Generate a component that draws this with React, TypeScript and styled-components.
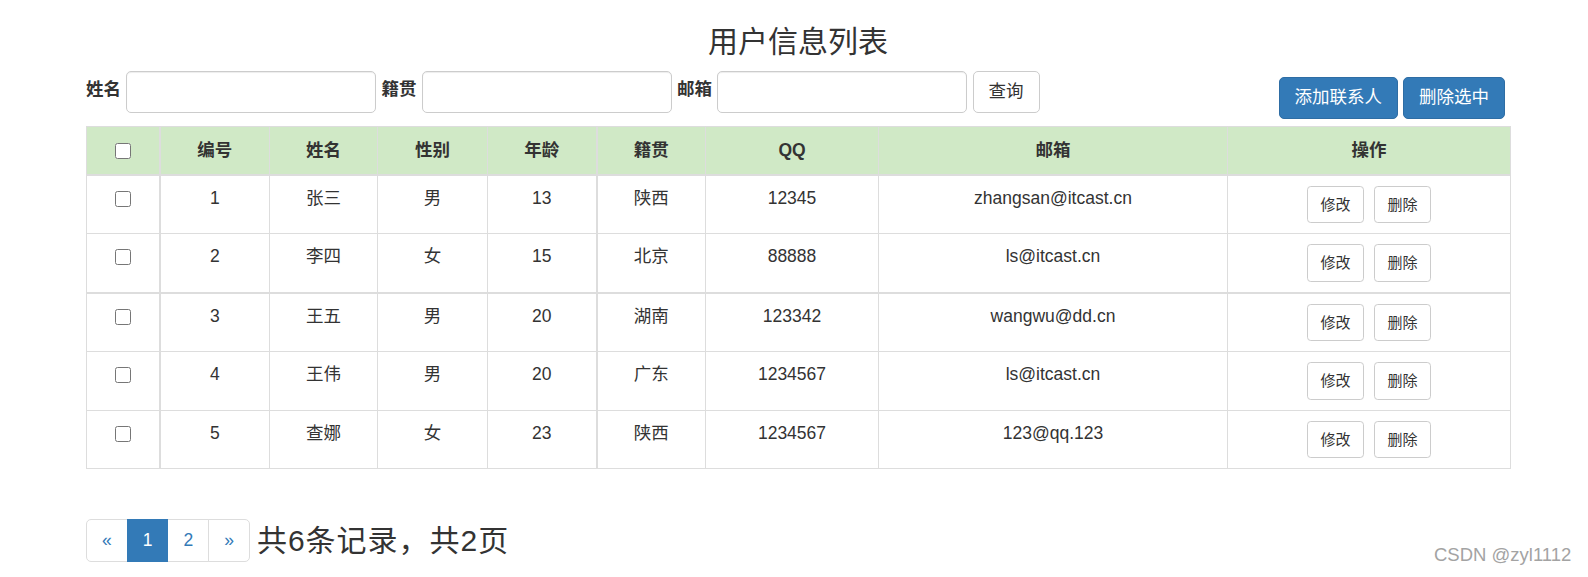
import styled, { createGlobalStyle } from 'styled-components';

const GlobalStyle = createGlobalStyle`
  html, body {
    margin: 0;
    padding: 0;
    background: #fff;
  }
  body {
    font-family: "Liberation Sans", Arial, "Noto Sans CJK SC", sans-serif;
    font-size: 17.5px;
    line-height: 25px;
    color: #333;
  }
  * {
    box-sizing: border-box;
  }
`;

const Page = styled.div`
  position: relative;
  width: 1588px;
  height: 577px;
  overflow: hidden;
`;

const Container = styled.div`
  width: 1424px;
  margin-left: 86px;
`;

const Title = styled.h3`
  margin: 25px 0 12.5px;
  font-size: 30px;
  font-weight: 400;
  line-height: 33px;
  text-align: center;
  color: #333;
`;

const Toolbar = styled.div`
  display: flex;
  justify-content: space-between;
  align-items: flex-start;
  height: 42.5px;
  margin-bottom: 12.5px;
`;

const SearchForm = styled.form`
  display: flex;
  align-items: center;
  gap: 5.5px;
`;

const FormGroup = styled.div`
  display: flex;
  align-items: center;
  gap: 5px;
`;

const Label = styled.label`
  font-weight: bold;
  font-size: 17.5px;
  margin-bottom: 5px;
  white-space: nowrap;
`;

const TextInput = styled.input`
  width: 250px;
  height: 42.5px;
  padding: 7.5px 15px;
  font-size: 17.5px;
  border: 1px solid #ccc;
  border-radius: 5px;
  box-shadow: inset 0 1px 1px rgba(0, 0, 0, 0.075);
  outline: none;
`;

const Button = styled.button<{ $primary?: boolean; $small?: boolean }>`
  display: inline-flex;
  align-items: center;
  justify-content: center;
  height: ${(p) => (p.$small ? '37.5px' : '42.5px')};
  padding: ${(p) => (p.$small ? '0 12.5px' : '0 15px')};
  font-family: inherit;
  font-size: ${(p) => (p.$small ? '15px' : '17.5px')};
  line-height: 1;
  white-space: nowrap;
  border-radius: ${(p) => (p.$small ? '3.75px' : '5px')};
  border: 1px solid ${(p) => (p.$primary ? '#2e6da4' : '#ccc')};
  background: ${(p) => (p.$primary ? '#337ab7' : '#fff')};
  color: ${(p) => (p.$primary ? '#fff' : '#333')};
  cursor: pointer;
`;

const Actions = styled.div`
  display: flex;
  gap: 5px;
  margin-top: 6px;
  margin-right: 5px;
`;

const Table = styled.table`
  width: 1424px;
  table-layout: fixed;
  border-collapse: collapse;
  margin-bottom: 25px;

  th,
  td {
    border: 1px solid #ddd;
    padding: 10px;
    line-height: 25px;
    text-align: center;
    vertical-align: top;
    font-size: 17.5px;
    white-space: nowrap;
  }
  th:nth-child(1),
  td:nth-child(1),
  th:nth-child(5),
  td:nth-child(5) {
    border-right-width: 2px;
  }
  tbody tr:nth-child(2) td {
    border-bottom-width: 2px;
  }
`;

const HeadRow = styled.tr`
  background: #d0e9c6;

  th {
    font-weight: bold;
    padding: 11px 10px;
    border-bottom-width: 2px;
  }
`;

const Check = styled.input`
  width: 16px;
  height: 16px;
  margin: 5px 0 0;
  vertical-align: top;
`;

const OpCell = styled.div`
  display: flex;
  justify-content: center;
  gap: 10px;
`;

const Footer = styled.div`
  display: flex;
  align-items: center;
  gap: 7px;
`;

const Pager = styled.ul`
  display: flex;
  margin: 25px 0;
  padding: 0;
  list-style: none;
`;

const PageItem = styled.li<{ $active?: boolean }>`
  display: flex;
  align-items: center;
  justify-content: center;
  height: 42.5px;
  padding: 0 15px;
  margin-left: -1px;
  font-size: 17.5px;
  border: 1px solid ${(p) => (p.$active ? '#337ab7' : '#ddd')};
  background: ${(p) => (p.$active ? '#337ab7' : '#fff')};
  color: ${(p) => (p.$active ? '#fff' : '#337ab7')};
  position: ${(p) => (p.$active ? 'relative' : 'static')};

  &:first-child {
    margin-left: 0;
    border-radius: 5px 0 0 5px;
  }
  &:last-child {
    border-radius: 0 5px 5px 0;
  }
`;

const Summary = styled.span`
  font-size: 30px;
  line-height: 33px;
  letter-spacing: 1px;
`;

const Watermark = styled.div`
  position: absolute;
  left: 1434px;
  top: 544px;
  font-family: "Liberation Sans", Arial, sans-serif;
  font-size: 18.5px;
  line-height: 22px;
  color: #a3a3a3;
  text-shadow: 0 0 1px #fff;
`;

const COLS = [73, 110, 108, 110, 109, 109, 173, 349, 283];

const HEADERS = ['编号', '姓名', '性别', '年龄', '籍贯', 'QQ', '邮箱', '操作'];

const USERS = [
  { id: 1, name: '张三', gender: '男', age: 13, place: '陕西', qq: '12345', email: 'zhangsan@itcast.cn' },
  { id: 2, name: '李四', gender: '女', age: 15, place: '北京', qq: '88888', email: 'ls@itcast.cn' },
  { id: 3, name: '王五', gender: '男', age: 20, place: '湖南', qq: '123342', email: 'wangwu@dd.cn' },
  { id: 4, name: '王伟', gender: '男', age: 20, place: '广东', qq: '1234567', email: 'ls@itcast.cn' },
  { id: 5, name: '查娜', gender: '女', age: 23, place: '陕西', qq: '1234567', email: '123@qq.123' },
];

export default function App() {
  return (
    <Page>
      <GlobalStyle />
      <Container>
        <Title>用户信息列表</Title>

        <Toolbar>
          <SearchForm onSubmit={(e) => e.preventDefault()}>
            <FormGroup>
              <Label>姓名</Label>
              <TextInput type="text" />
            </FormGroup>
            <FormGroup>
              <Label>籍贯</Label>
              <TextInput type="text" />
            </FormGroup>
            <FormGroup>
              <Label>邮箱</Label>
              <TextInput type="text" />
            </FormGroup>
            <Button type="submit">查询</Button>
          </SearchForm>
          <Actions>
            <Button $primary>添加联系人</Button>
            <Button $primary>删除选中</Button>
          </Actions>
        </Toolbar>

        <Table>
          <colgroup>
            {COLS.map((w, i) => (
              <col key={i} style={{ width: w }} />
            ))}
          </colgroup>
          <thead>
            <HeadRow>
              <th>
                <Check type="checkbox" />
              </th>
              {HEADERS.map((h) => (
                <th key={h}>{h}</th>
              ))}
            </HeadRow>
          </thead>
          <tbody>
            {USERS.map((u) => (
              <tr key={u.id}>
                <td>
                  <Check type="checkbox" />
                </td>
                <td>{u.id}</td>
                <td>{u.name}</td>
                <td>{u.gender}</td>
                <td>{u.age}</td>
                <td>{u.place}</td>
                <td>{u.qq}</td>
                <td>{u.email}</td>
                <td>
                  <OpCell>
                    <Button $small>修改</Button>
                    <Button $small>删除</Button>
                  </OpCell>
                </td>
              </tr>
            ))}
          </tbody>
        </Table>

        <Footer>
          <Pager>
            <PageItem>«</PageItem>
            <PageItem $active>1</PageItem>
            <PageItem>2</PageItem>
            <PageItem>»</PageItem>
          </Pager>
          <Summary>共6条记录，共2页</Summary>
        </Footer>
      </Container>
      <Watermark>CSDN @zyl1112</Watermark>
    </Page>
  );
}
